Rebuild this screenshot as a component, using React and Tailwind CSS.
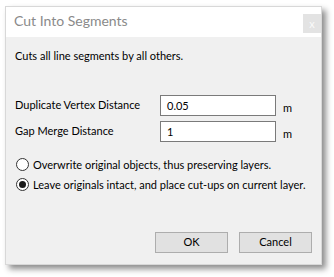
export default function App() {
  const font = { fontFamily: 'Lato, "Liberation Sans", sans-serif' };
  return (
    <div className="w-[334px] h-[277px] bg-white pl-[5px] pt-[6px]" style={font}>
      <div className="w-[317px] h-[259px] flex flex-col bg-[#f0f0f0] shadow-[4px_4px_6px_rgba(0,0,0,0.45)] border border-[#d8d8d8]">
        <div className="h-[30px] bg-white flex items-start justify-between">
          <div className="pl-[8px] pt-[6px] text-[14px] leading-[16px] text-[#8a8a8a] whitespace-nowrap">Cut Into Segments</div>
          <div className="mt-[7px] mr-[0px] w-[18px] h-[19px] bg-[#e3e3e3] flex items-center justify-center text-[#fafafa] text-[11px] leading-none">x</div>
        </div>
        <div className="flex flex-col pl-[9px] pr-[9px] text-[11px] text-black whitespace-nowrap">
          <div className="mt-[11px] leading-[15px]">Cuts all line segments by all others.</div>
          <div className="mt-[32px] flex items-center h-[21px]">
            <div className="w-[145px] leading-[15px] -mt-[3px]">Duplicate Vertex Distance</div>
            <div className="w-[116px] h-[21px] border border-[#7a7a7a] bg-white flex items-center pl-[6px] leading-[15px]">0.05</div>
            <div className="ml-[7px] mt-[4px] leading-[15px]">m</div>
          </div>
          <div className="mt-[5px] flex items-center h-[21px]">
            <div className="w-[145px] leading-[15px] -mt-[3px]">Gap Merge Distance</div>
            <div className="w-[116px] h-[21px] border border-[#7a7a7a] bg-white flex items-center pl-[6px] leading-[15px]">1</div>
            <div className="ml-[7px] mt-[4px] leading-[15px]">m</div>
          </div>
          <div className="mt-[15px] flex items-center h-[14px]">
            <div className="ml-[1px] w-[13px] h-[13px] rounded-full border border-[#333] bg-white"></div>
            <div className="ml-[4px] leading-[15px]">Overwrite original objects, thus preserving layers.</div>
          </div>
          <div className="mt-[6px] flex items-center h-[14px]">
            <div className="ml-[1px] w-[13px] h-[13px] rounded-full border border-[#333] bg-white flex items-center justify-center">
              <div className="w-[7px] h-[7px] rounded-full bg-[#1a1a1a]"></div>
            </div>
            <div className="ml-[4px] leading-[15px]">Leave originals intact, and place cut-ups on current layer.</div>
          </div>
          <div className="mt-[41px] flex justify-end gap-[11px] pr-[0px]">
            <div className="w-[73px] h-[21px] bg-[#e1e1e1] border border-[#adadad] flex items-center justify-center">OK</div>
            <div className="w-[73px] h-[21px] bg-[#e1e1e1] border border-[#adadad] flex items-center justify-center">Cancel</div>
          </div>
        </div>
      </div>
    </div>
  );
}
